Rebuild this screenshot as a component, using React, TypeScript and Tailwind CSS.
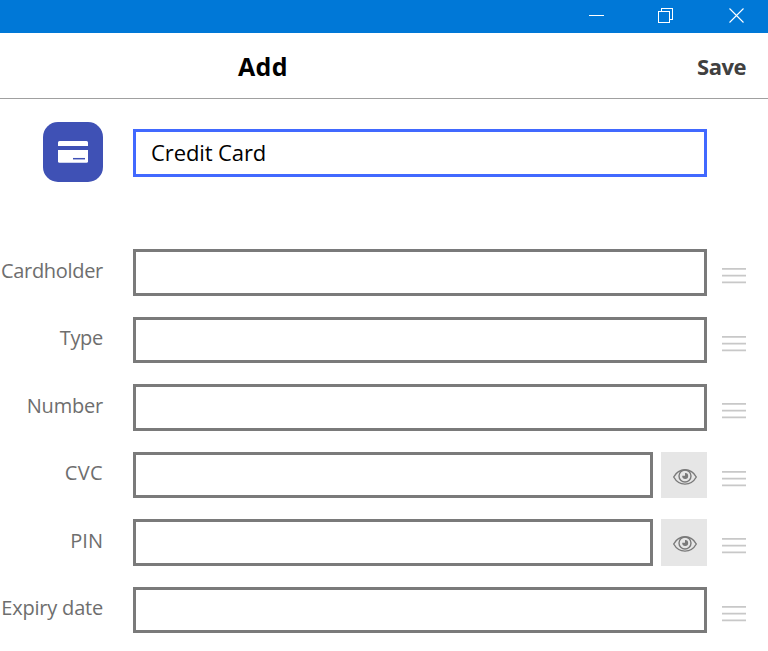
import clsx from "clsx";

interface Field {
  label: string;
  secret?: boolean;
  height: string;
  tracking: string;
}

const fields: Field[] = [
  { label: "Cardholder", height: "h-[47px] pt-2", tracking: "tracking-[-0.3px]" },
  { label: "Type", height: "h-[46px] pt-[7px]", tracking: "tracking-[-0.3px]" },
  { label: "Number", height: "h-[47px] pt-2", tracking: "tracking-[-0.2px]" },
  { label: "CVC", secret: true, height: "h-[46px] pt-[7px]", tracking: "tracking-[0.4px]" },
  { label: "PIN", secret: true, height: "h-[47px] pt-2", tracking: "tracking-normal" },
  { label: "Expiry date", height: "h-[46px] pt-[7px]", tracking: "tracking-[-0.2px]" },
];

function TitleBar() {
  return (
    <div className="flex h-[33px] justify-end bg-[#0078d7] pr-[23px] pt-2 text-white">
      <div className="flex gap-[54px]">
        <button aria-label="Minimize" className="block h-4 w-4">
          <svg width="16" height="16" viewBox="0 0 16 16" fill="none" stroke="currentColor" shapeRendering="crispEdges">
            <path d="M1 7.5h15" />
          </svg>
        </button>
        <button aria-label="Restore" className="block h-4 w-4">
          <svg width="16" height="16" viewBox="0 0 16 16" fill="none" stroke="currentColor" shapeRendering="crispEdges">
            <path d="M.5 3.5h11v11H.5zM3.5 3.5v-3h11v11h-3" />
          </svg>
        </button>
        <button aria-label="Close" className="ml-px block h-4 w-4">
          <svg width="16" height="16" viewBox="0 0 16 16" fill="none" stroke="currentColor" strokeWidth="1.1">
            <path d="M.5.5l14 14M14.5.5l-14 14" />
          </svg>
        </button>
      </div>
    </div>
  );
}

function Header() {
  return (
    <div className="flex h-[66px] items-center justify-between border-b border-[#a0a0a0] pl-[238px] pr-[22px] pt-px">
      <h1 className="text-[25px] font-bold leading-none tracking-[0.3px] text-black">Add</h1>
      <button className="text-[22px] font-bold leading-none tracking-[-0.5px] text-[#404040]">Save</button>
    </div>
  );
}

function CardIcon() {
  return (
    <div className="flex size-[60px] items-center justify-center rounded-[15px] bg-[#3f51b5]">
      <svg width="30" height="22" viewBox="0 0 30 22">
        <path fill="#fff" d="M1.5 0h27A1.5 1.5 0 0 1 30 1.5V5H0V1.5A1.5 1.5 0 0 1 1.5 0z" />
        <path fill="#fff" d="M0 9h30v11.2a1.5 1.5 0 0 1-1.5 1.5h-27A1.5 1.5 0 0 1 0 20.2z" />
        <path stroke="#3f51b5" strokeWidth="1.5" d="M15 17.7h12" />
      </svg>
    </div>
  );
}

function EyeIcon() {
  return (
    <svg width="24" height="16" viewBox="0 0 24 16" fill="none" stroke="#7a7a7a">
      <path strokeWidth="1.4" d="M.7 8C3.2 3.5 7.3.8 12 .8S20.800 3.5 23.300 8C20.800 12.500 16.700 15.100 12 15.100S3.200 12.500.7 8z" />
      <circle cx="12" cy="7" r="6" strokeWidth="1.4" />
      <path fill="#7a7a7a" stroke="none" d="M12 4V6.800H9.200A3 3 0 1 0 12 4z" />
    </svg>
  );
}

function DragHandle() {
  return (
    <svg className="mt-[18px] shrink-0" width="24" height="18" viewBox="0 0 24 18" stroke="#c8c8c8" strokeWidth="1.7">
      <path d="M0 1.9h24M0 8.6h24M0 15.3h24" />
    </svg>
  );
}

function FieldRow({ label, secret, height, tracking }: Field) {
  return (
    <div className="flex">
      <div className={clsx("flex w-[103px] shrink-0 justify-end whitespace-nowrap text-[20px] leading-7 text-[#6e6e6e]", height, tracking)}>
        {label}
      </div>
      <div className={clsx("ml-[30px] border-3 border-[#7a7a7a] bg-white", secret ? "w-[520px]" : "w-[574px]")} />
      {secret && (
        <button aria-label="Show" className="ml-2 flex w-[46px] items-center justify-center bg-[#e6e6e6] pl-[2px] pt-[3px]">
          <EyeIcon />
        </button>
      )}
      <div className="ml-[15px]">
        <DragHandle />
      </div>
    </div>
  );
}

export default function App() {
  return (
    <div className="h-[651px] w-[768px] overflow-hidden bg-white font-['Open_Sans','Noto_Sans',sans-serif]">
      <TitleBar />
      <Header />
      <div className="flex items-start gap-[30px] pl-[43px] pt-[23px]">
        <CardIcon />
        <div className="mt-[7px] flex h-12 w-[574px] items-center border-3 border-[#4169ff] pl-[15px] pb-px text-[22px] tracking-[-0.1px] text-black">
          Credit Card
        </div>
      </div>
      <div className="flex flex-col gap-[21px] pt-[67px]">
        {fields.map((field) => (
          <FieldRow key={field.label} {...field} />
        ))}
      </div>
    </div>
  );
}
